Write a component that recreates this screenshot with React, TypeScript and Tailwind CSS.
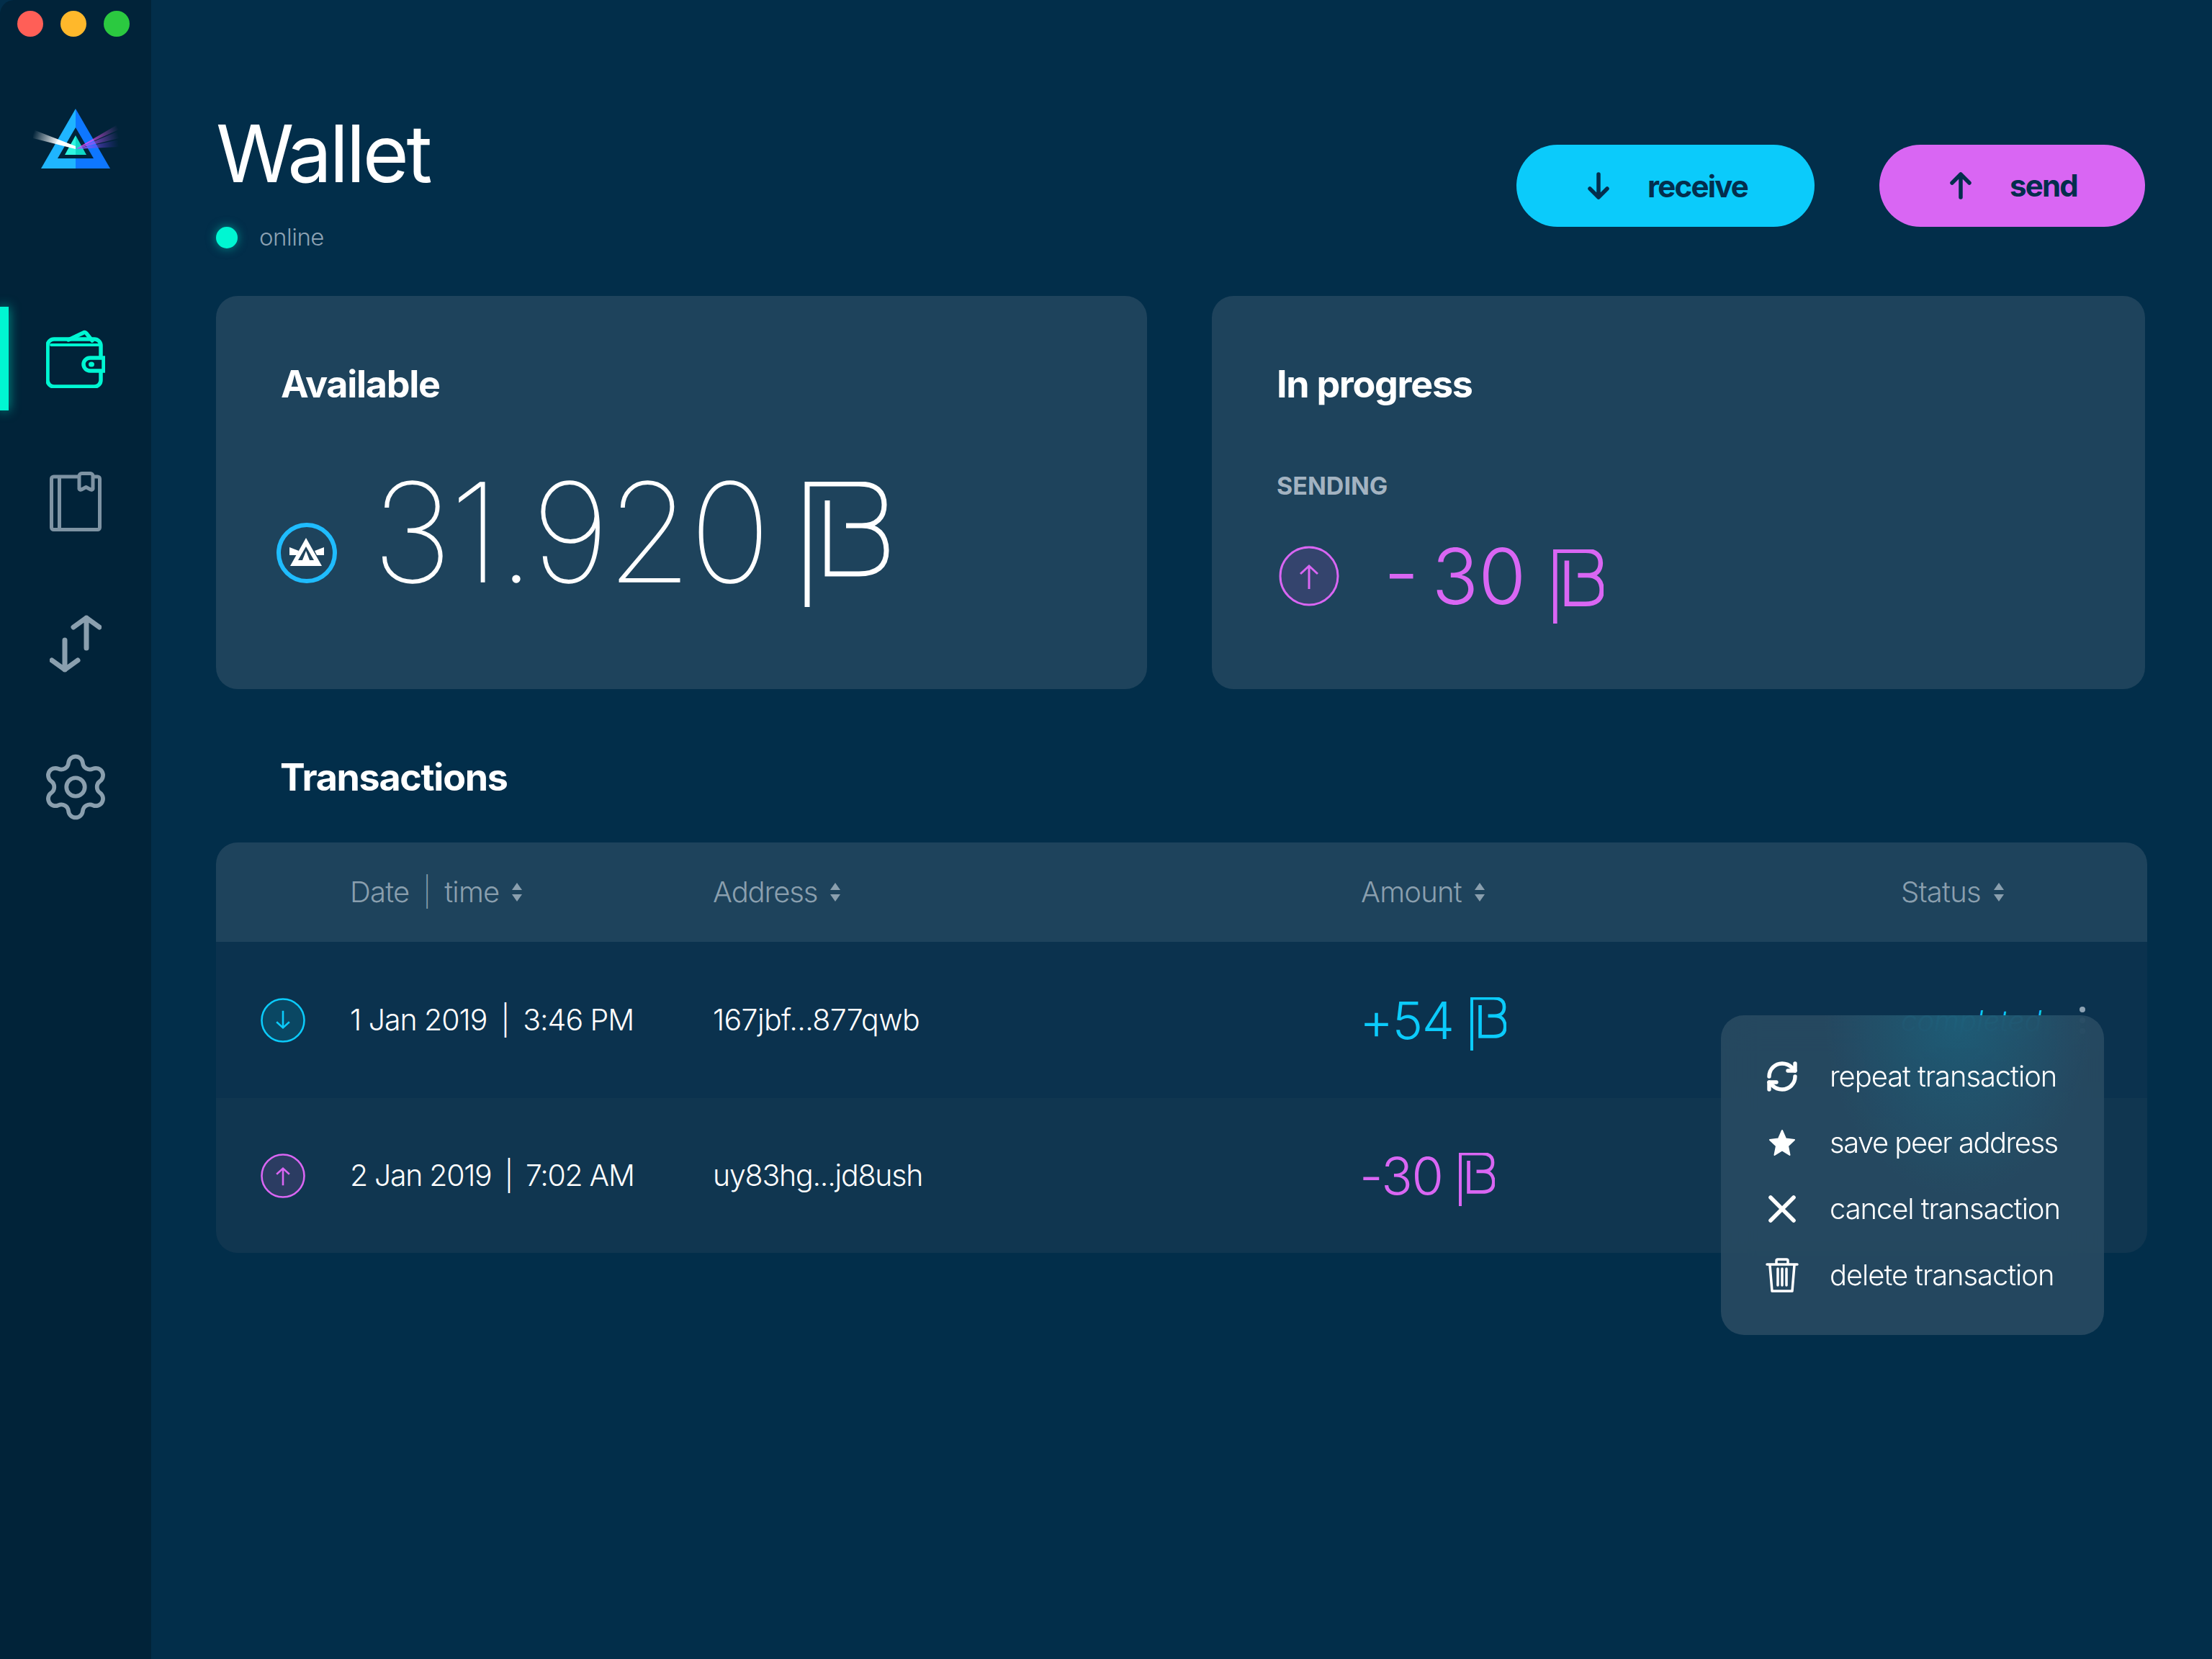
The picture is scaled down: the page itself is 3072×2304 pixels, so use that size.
import React from 'react';
import { RefreshCw, Settings, X } from 'lucide-react';

function BeamSign({ w, h, sw, color }: { w: number; h: number; sw: number; color: string }) {
  return (
    <svg width={w} height={h} viewBox="0 0 118 174" preserveAspectRatio="none" fill="none" stroke={color} strokeWidth={sw} className="shrink-0">
      <path d="M4 174V3H76C100 3 111 14 111 32C111 50 100 61 80 61H58M80 61C102 61 114 74 114 96C114 118 100 128 76 128H32V26" />
    </svg>
  );
}

function SortArrows() {
  return (
    <svg width="14" height="26" viewBox="0 0 14 26" fill="#8a9fae" className="shrink-0">
      <path d="M7 0L14 10H0Z" />
      <path d="M7 26L0 16H14Z" />
    </svg>
  );
}

function ArrowCircle({ dir, color, fill, size, sw }: { dir: 'up' | 'down'; color: string; fill: string; size: number; sw: number }) {
  return (
    <svg width={size} height={size} viewBox="0 0 84 84" fill="none" stroke={color} className="shrink-0">
      <circle cx="42" cy="42" r="40" fill={fill} strokeWidth={sw} />
      {dir === 'up' ? <path d="M42 60V28M30 39L42 28L54 39" strokeWidth={sw} /> : <path d="M42 24V56M30 45L42 56L54 45" strokeWidth={sw} />}
    </svg>
  );
}

function Logo() {
  return (
    <svg width="130" height="90" viewBox="40 150 130 90" className="shrink-0">
      <defs>
        <linearGradient id="wb" x1="46" y1="186" x2="105" y2="207" gradientUnits="userSpaceOnUse">
          <stop offset="0" stopColor="#fff" stopOpacity="0" />
          <stop offset="0.6" stopColor="#fff" />
        </linearGradient>
        <linearGradient id="p1" x1="105" y1="207" x2="165" y2="180" gradientUnits="userSpaceOnUse">
          <stop offset="0.1" stopColor="#ff45f5" />
          <stop offset="1" stopColor="#d85bf0" stopOpacity="0" />
        </linearGradient>
        <linearGradient id="p2" x1="105" y1="207" x2="165" y2="190" gradientUnits="userSpaceOnUse">
          <stop offset="0.1" stopColor="#b04ff5" />
          <stop offset="1" stopColor="#a050f0" stopOpacity="0" />
        </linearGradient>
        <linearGradient id="p3" x1="105" y1="207" x2="165" y2="200" gradientUnits="userSpaceOnUse">
          <stop offset="0.1" stopColor="#9060ff" />
          <stop offset="1" stopColor="#4a30d0" stopOpacity="0" />
        </linearGradient>
      </defs>
      <path d="M105 151V234H57Z" fill="#1fb5ff" />
      <path d="M105 151V234H153Z" fill="#0e77ff" />
      <path d="M105 177L130 220H80Z" fill="#012339" />
      <path d="M105 188V215H90Z" fill="#2ff5e0" />
      <path d="M105 188V215H120Z" fill="#10d8c8" />
      <path d="M46 180L105 203V207L46 192Z" fill="url(#wb)" />
      <path d="M105 207L165 172V180L105 207Z" fill="url(#p1)" />
      <path d="M105 207L165 182V192L105 207Z" fill="url(#p2)" />
      <path d="M105 207L165 194V204L105 207Z" fill="url(#p3)" />
    </svg>
  );
}

function CoinIcon() {
  return (
    <svg width="84" height="84" viewBox="0 0 84 84" className="shrink-0">
      <circle cx="42" cy="42" r="39" fill="#1e435c" stroke="#1fbcff" strokeWidth="6" />
      <path d="M18 34L31 39L28 45H18Z" fill="#fff" />
      <path d="M66 34L53 39L56 45H66Z" fill="#fff" />
      <path d="M41 21L63 60H19Z" fill="#fff" />
      <path d="M41 33L52 52H30Z" fill="#1e435c" />
      <path d="M41 39L46 52H36Z" fill="#fff" />
    </svg>
  );
}

function WalletIcon() {
  return (
    <svg width="82" height="81" viewBox="0 0 82 81" fill="none" stroke="#00f6d2" strokeWidth="5.500" className="shrink-0">
      <path d="M76 37V22a9 9 0 0 0-9-9H11a9 9 0 0 0-9 9v48a9 9 0 0 0 9 9h56a9 9 0 0 0 9-9V58" />
      <path d="M7 21H74" strokeWidth="4" strokeLinecap="round" />
      <path d="M31 14L52 4a3 3 0 0 1 4 1L64 15" strokeLinecap="round" />
      <path d="M80 39H61a9 9 0 0 0 0 18h19z" />
      <ellipse cx="63" cy="48" rx="4" ry="3.500" fill="#00f6d2" stroke="none" />
    </svg>
  );
}

function BookIcon() {
  return (
    <svg width="72" height="83" viewBox="0 0 72 83" fill="none" stroke="#7e93a3" strokeWidth="5" className="shrink-0">
      <rect x="2.500" y="7" width="67" height="73.500" rx="3" />
      <path d="M13.500 7V80" />
      <path d="M41 24V6a3.500 3.500 0 0 1 3.500-3.500h12A3.500 3.500 0 0 1 60 6V24a2 2 0 0 1-3 1L50.500 21.500L44 25a2 2 0 0 1-3-1Z" fill="#012339" strokeLinejoin="round" />
    </svg>
  );
}

function TransferIcon() {
  return (
    <svg width="72" height="82" viewBox="0 0 72 82" fill="none" stroke="#8a9fae" strokeWidth="7" strokeLinecap="round" strokeLinejoin="round" className="shrink-0">
      <path d="M51 47V5M33 18L51 5L69 18" />
      <path d="M21 36V77M3 64L21 77L39 64" />
    </svg>
  );
}

function TrashIcon() {
  return (
    <svg width="46" height="48" viewBox="0 0 46 48" fill="none" stroke="#fff" strokeWidth="3.500" strokeLinecap="round" strokeLinejoin="round" className="shrink-0">
      <path d="M2 9H44" />
      <path d="M15 8V4a2 2 0 0 1 2-2h12a2 2 0 0 1 2 2v4" />
      <path d="M6 10L9 46H37L40 10" />
      <path d="M17 15V38M23 15V38M29 15V38" />
    </svg>
  );
}

function StarIcon() {
  return (
    <svg width="38" height="38" viewBox="0 0 38 38" fill="#fff" stroke="#fff" strokeWidth="2" strokeLinejoin="round" className="shrink-0">
      <path d="M19 2L24 13.500L36 15L27 23.500L29.500 36L19 29.500L8.500 36L11 23.500L2 15L14 13.500Z" />
    </svg>
  );
}

const menuItems = [
  { label: 'repeat transaction', tracking: 'tracking-[-1.100px]', icon: <RefreshCw size={52} strokeWidth={2.700} color="#fff" /> },
  { label: 'save peer address', tracking: 'tracking-[-1.500px]', icon: <StarIcon /> },
  { label: 'cancel transaction', tracking: 'tracking-[-1.100px]', icon: <X size={64} strokeWidth={2.100} color="#fff" className="shrink-0" /> },
  { label: 'delete transaction', tracking: 'tracking-[-1.100px]', icon: <TrashIcon /> },
];

export default function App() {
  return (
    <div className="flex w-[3072px] h-[2304px] overflow-hidden bg-[#022e4a] font-['Inter',sans-serif] text-white">
      {/* sidebar */}
      <aside className="w-[210px] shrink-0 bg-[#012339] rounded-tl-[20px] relative flex flex-col items-center">
        <div className="flex gap-[24px] self-start pl-[24px] pt-[15px]">
          <div className="w-[36px] h-[36px] rounded-full bg-[#ff5f57]" />
          <div className="w-[36px] h-[36px] rounded-full bg-[#ffb82b]" />
          <div className="w-[36px] h-[36px] rounded-full bg-[#2bc940]" />
        </div>
        <div className="mt-[99px] self-start pl-[40px]">
          <Logo />
        </div>
        <div className="absolute left-0 top-[426px] w-[12px] h-[144px] bg-[#00f6d2] shadow-[0_0_16px_rgba(0,246,210,0.6)]" />
        <div className="mt-[218px]"><WalletIcon /></div>
        <div className="mt-[116px]"><BookIcon /></div>
        <div className="mt-[115px]"><TransferIcon /></div>
        <div className="mt-[107px]"><Settings size={102} strokeWidth={1.350} color="#8a9fae" /></div>
      </aside>

      {/* main */}
      <main className="flex-1 pl-[90px] pr-[93px] pt-[155px]">
        <div className="flex justify-between items-start">
          <div>
            <h1 className="text-[110px] leading-[112px] font-normal tracking-[-3.500px] mt-[2px] mb-[-2px]">Wallet</h1>
            <div className="flex items-center gap-[30px] mt-[43px] h-[40px]">
              <div className="w-[30px] h-[30px] rounded-full bg-[#00f6d2] shadow-[0_0_14px_rgba(0,246,210,0.5)]" />
              <span className="text-[33px] font-light tracking-[-0.5px] text-[#8da2b3]">online</span>
            </div>
          </div>
          <div className="flex gap-[90px] mt-[46px]">
            <button className="w-[414px] h-[114px] rounded-full bg-[#0bcbfb] flex items-center pl-[97px] text-[#032e4d]">
              <svg width="34" height="38" viewBox="0 0 34 38" fill="none" stroke="#032e4d" strokeWidth="5.500" strokeLinecap="round" strokeLinejoin="round">
                <path d="M17 3V35M5 23L17 35L29 23" />
              </svg>
              <span className="ml-[51px] text-[42px] font-bold tracking-[-1.800px]">receive</span>
            </button>
            <button className="w-[369px] h-[114px] rounded-full bg-[#d966f3] flex items-center pl-[96px] text-[#032e4d]">
              <svg width="34" height="38" viewBox="0 0 34 38" fill="none" stroke="#032e4d" strokeWidth="5.500" strokeLinecap="round" strokeLinejoin="round">
                <path d="M17 35V3M5 15L17 3L29 15" />
              </svg>
              <span className="ml-[51px] text-[42px] font-bold tracking-[-1.800px] -mt-[2px]">send</span>
            </button>
          </div>
        </div>

        {/* balance cards */}
        <div className="flex gap-[90px] mt-[61px]">
          <section className="w-[1293px] h-[546px] bg-[#1e435c] rounded-[30px] pt-[93px] pl-[90px]">
            <h2 className="text-[52px] leading-[60px] font-bold tracking-[-1.300px]">Available</h2>
            <div className="flex items-start mt-[80px] -ml-[6px]">
              <div className="mt-[82px]"><CoinIcon /></div>
              <span className="ml-[49px] text-[190px] leading-[190px] font-thin tracking-[-3px] [-webkit-text-stroke:1.500px_#fff]">31.920</span>
              <div className="mt-[25px] ml-[50px]"><BeamSign w={118} h={174} sw={7} color="#fff" /></div>
            </div>
          </section>
          <section className="flex-1 h-[546px] bg-[#1e435c] rounded-[30px] pt-[93px] pl-[90px]">
            <h2 className="text-[52px] leading-[60px] font-bold tracking-[-1.300px]">In progress</h2>
            <div className="mt-[91px] h-[40px] leading-[40px] text-[34px] font-bold tracking-[0px] text-[#a3b3c1]">SENDING</div>
            <div className="flex items-start mt-[45px] text-[#d966f3]">
              <div className="mt-[18px] ml-[3px]">
                <ArrowCircle dir="up" color="#d966f3" fill="#34446d" size={84} sw={3} />
              </div>
              <span className="ml-[62px] text-[107px] leading-[120px] font-light whitespace-pre [word-spacing:-12px]">- 30</span>
              <div className="mt-[23px] ml-[38px]"><BeamSign w={70} h={103} sw={11} color="#d966f3" /></div>
            </div>
          </section>
        </div>

        <h2 className="mt-[93px] pl-[90px] text-[52px] leading-[60px] font-bold tracking-[-1.300px] -ml-[1px]">Transactions</h2>

        {/* table */}
        <div className="relative mt-[60px] -mr-[3px]">
          <div className="grid grid-cols-[186px_504px_900px_750px_1fr] items-center h-[138px] bg-[#1e435c] rounded-t-[30px] text-[40px] font-light tracking-[-0.800px] text-[#8a9fae]">
            <div />
            <div className="flex items-center gap-[18px]"><span>Date<span className="mx-[19px] font-extralight">|</span>time</span><SortArrows /></div>
            <div className="flex items-center gap-[18px]"><span className="tracking-[-1.100px]">Address</span><SortArrows /></div>
            <div className="flex items-center gap-[18px]"><span>Amount</span><SortArrows /></div>
            <div className="flex items-center gap-[18px]"><span>Status</span><SortArrows /></div>
          </div>

          <div className="grid grid-cols-[186px_504px_900px_750px_1fr] items-center h-[217px] bg-[#0b324e] text-[41px] font-light">
            <div className="pl-[62px]"><ArrowCircle dir="down" color="#0bcbfb" fill="#0a4763" size={62} sw={3.500} /></div>
            <div className="tracking-[-1px]">1 Jan 2019<span className="mx-[19px]">|</span>3:46 PM</div>
            <div className="tracking-[-0.600px]">167jbf...877qwb</div>
            <div className="flex items-center gap-[23px] text-[#0bcbfb] -ml-[2px]">
              <span className="text-[72px] font-light tracking-[-1.500px]">+54</span>
              <div className="mt-[10px]"><BeamSign w={50} h={74} sw={11} color="#0bcbfb" /></div>
            </div>
            <div className="flex items-center justify-between pr-[86px]">
              <span className="italic text-[#0bcbfb] text-[40px] mt-[3px]">completed</span>
              <div className="flex flex-col gap-[7px]">
                <div className="w-[8px] h-[8px] rounded-full bg-[#8da2b3]" />
                <div className="w-[8px] h-[8px] rounded-full bg-[#8da2b3]" />
                <div className="w-[8px] h-[8px] rounded-full bg-[#8da2b3]" />
              </div>
            </div>
          </div>

          <div className="grid grid-cols-[186px_504px_900px_750px_1fr] items-center h-[215px] bg-[#103650] rounded-b-[30px] text-[41px] font-light">
            <div className="pl-[62px]"><ArrowCircle dir="up" color="#d966f3" fill="#2b3c62" size={62} sw={3.500} /></div>
            <div className="tracking-[-1.300px]">2 Jan 2019<span className="mx-[18px]">|</span>7:02 AM</div>
            <div className="tracking-[-1.200px]">uy83hg...jd8ush</div>
            <div className="flex items-center gap-[23px] text-[#d966f3] -ml-[2px]">
              <span className="text-[72px] font-light tracking-[-1.500px]">-30</span>
              <div className="mt-[10px]"><BeamSign w={50} h={74} sw={11} color="#d966f3" /></div>
            </div>
            <div />
          </div>

          {/* context menu */}
          <div className="absolute left-[2090px] top-[240px] w-[532px] h-[444px] rounded-[32px] bg-[#284a62]/90 bg-[radial-gradient(ellipse_at_62%_0%,rgba(20,120,150,0.4),transparent_40%)] backdrop-blur-xl pt-[39px] pl-[61px]">
            {menuItems.map((item) => (
              <div key={item.label} className="flex items-center h-[92px]">
                <div className="w-[48px] flex justify-center">{item.icon}</div>
                <span className={`ml-[42px] text-[40px] font-light whitespace-nowrap ${item.tracking}`}>{item.label}</span>
              </div>
            ))}
          </div>
        </div>
      </main>
    </div>
  );
}
